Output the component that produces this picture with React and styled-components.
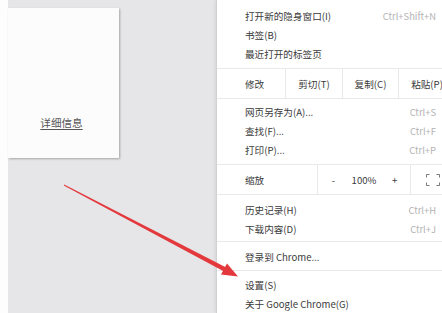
import React from "react";
import styled, { createGlobalStyle } from "styled-components";

const GlobalStyle = createGlobalStyle`
  html, body {
    margin: 0;
    padding: 0;
    width: 442px;
    height: 313px;
    overflow: hidden;
    background: #e6e5e8;
  }
  body {
    font-family: "Noto Sans CJK SC", "Noto Sans", sans-serif;
  }
`;

const Page = styled.div`
  position: relative;
  display: flex;
  width: 442px;
  height: 313px;
  overflow: hidden;
`;

const LeftEdge = styled.div`
  width: 8px;
  flex-shrink: 0;
  background: #fdfdfe;
`;

const Desk = styled.div`
  flex: 0 0 208px;
  padding-top: 8px;
  background: #e6e5e8;
`;

const Card = styled.div`
  width: 111px;
  height: 150px;
  box-sizing: border-box;
  display: flex;
  flex-direction: column;
  justify-content: flex-end;
  align-items: center;
  padding: 0 4px 28px 0;
  background: #fcfcfd;
  box-shadow: 1px 1px 2px rgba(0, 0, 0, 0.28);
`;

const DetailLink = styled.span`
  font-size: 10.6px;
  color: #555;
  text-decoration: underline;
  text-underline-offset: 2px;
`;

const Menu = styled.div`
  width: 238px;
  flex-shrink: 0;
  background: #fff;
  border-left: 1px solid #d2d2d4;
  box-shadow: -1px 0 3px rgba(0, 0, 0, 0.08);
  font-size: 9.6px;
  color: #3a3a3a;
`;

const Group = styled.div`
  padding: ${(p) => p.$pad || "5px 0 4px"};
  border-bottom: ${(p) => (p.$last ? "none" : "1px solid #e9e9e9")};
`;

const Item = styled.div`
  display: flex;
  align-items: center;
  justify-content: space-between;
  height: 19px;
  padding: 0 19px 0 28px;
  white-space: nowrap;
`;

const Shortcut = styled.span`
  color: #b3b3b3;
  font-size: 9.4px;
`;

const ToolRow = styled.div`
  display: flex;
  align-items: stretch;
  height: 29px;
  border-bottom: 1px solid #e9e9e9;
`;

const ToolLabel = styled.div`
  width: ${(p) => p.$w}px;
  flex-shrink: 0;
  display: flex;
  align-items: center;
  padding-left: 28px;
  box-sizing: border-box;
`;

const ToolCell = styled.div`
  width: ${(p) => p.$w}px;
  flex-shrink: 0;
  display: flex;
  align-items: center;
  justify-content: center;
  border-left: 1px solid #e9e9e9;
  box-sizing: border-box;
`;

const ZoomCell = styled(ToolCell)`
  display: grid;
  grid-template-columns: repeat(3, 1fr);
  justify-items: center;
  align-items: center;
`;

const Arrow = styled.svg`
  position: absolute;
  left: 0;
  top: 0;
  pointer-events: none;
  filter: blur(0.35px);
`;

const FullscreenIcon = () => (
  <svg width="14" height="12" viewBox="0 0 14 12" fill="none" stroke="#7a7a7a" strokeWidth="1">
    <path d="M0.5 3.5V0.5H3.5M10.5 0.5H13.5V3.5M13.5 8.5V11.5H10.5M3.5 11.5H0.5V8.5" />
  </svg>
);

const Row = ({ label, keys }) => (
  <Item>
    <span>{label}</span>
    {keys && <Shortcut>{keys}</Shortcut>}
  </Item>
);

export default function App() {
  return (
    <Page>
      <GlobalStyle />
      <LeftEdge />
      <Desk>
        <Card>
          <DetailLink>详细信息</DetailLink>
        </Card>
      </Desk>
      <Menu>
        <Group $pad="6px 0 5px">
          <Row label="打开新的隐身窗口(I)" keys="Ctrl+Shift+N" />
          <Row label="书签(B)" />
          <Row label="最近打开的标签页" />
        </Group>
        <ToolRow>
          <ToolLabel $w={68}>修改</ToolLabel>
          <ToolCell $w={57}>剪切(T)</ToolCell>
          <ToolCell $w={56}>复制(C)</ToolCell>
          <ToolCell $w={57}>粘贴(P)</ToolCell>
        </ToolRow>
        <Group $pad="3px 0 5px">
          <Row label="网页另存为(A)..." keys="Ctrl+S" />
          <Row label="查找(F)..." keys="Ctrl+F" />
          <Row label="打印(P)..." keys="Ctrl+P" />
        </Group>
        <ToolRow>
          <ToolLabel $w={100}>缩放</ToolLabel>
          <ZoomCell $w={93}>
            <span>-</span>
            <span>100%</span>
            <span>+</span>
          </ZoomCell>
          <ToolCell $w={44}>
            <FullscreenIcon />
          </ToolCell>
        </ToolRow>
        <Group $pad="5px 0 3px">
          <Row label="历史记录(H)" keys="Ctrl+H" />
          <Row label="下载内容(D)" keys="Ctrl+J" />
        </Group>
        <Group $pad="5px 0 4px">
          <Row label="登录到 Chrome..." />
        </Group>
        <Group $pad="4px 0 0" $last>
          <Row label="设置(S)" />
          <Row label="关于 Google Chrome(G)" />
        </Group>
      </Menu>
      <Arrow width="442" height="313" viewBox="0 0 442 313">
        <polygon
          points="63.8,185.4 64.2,184.6 227.2,268 225,272"
          fill="#e3393d"
        />
        <polygon points="238,276.5 221,274.6 227,263.4" fill="#e3393d" />
      </Arrow>
    </Page>
  );
}
